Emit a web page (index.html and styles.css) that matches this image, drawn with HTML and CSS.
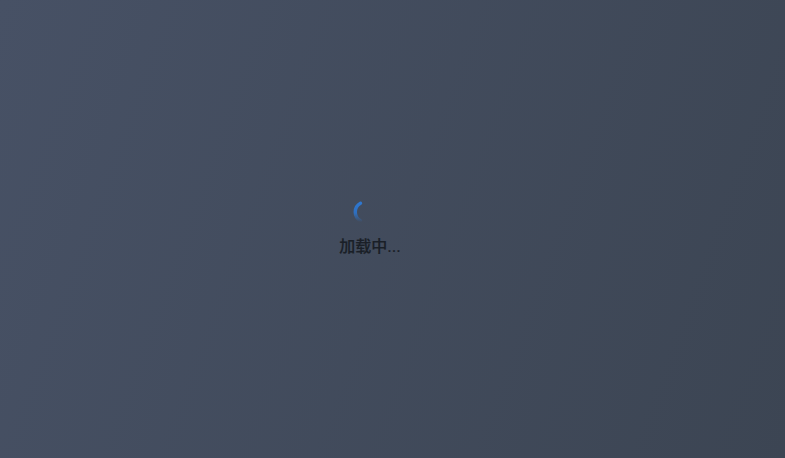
FILE: index.html
```html
<!DOCTYPE html>
<html lang="zh-CN">
<head>
    <meta charset="UTF-8">
    <title>加载中</title>
    <link rel="stylesheet" href="styles.css">
</head>
<body>
    <div class="loading">
        <svg class="spinner" width="20" height="24" viewBox="0 0 20 24">
            <defs>
                <linearGradient id="arc-fade" gradientUnits="userSpaceOnUse" x1="0" y1="2" x2="0" y2="22">
                    <stop offset="0" stop-color="#2e78d2"/>
                    <stop offset="0.55" stop-color="#2e6fc0"/>
                    <stop offset="1" stop-color="#2e6fc0" stop-opacity="0"/>
                </linearGradient>
            </defs>
            <path d="M7.5 3.2 A10 10 0 0 0 7.5 20.8" fill="none" stroke="url(#arc-fade)" stroke-width="3.4" stroke-linecap="round"/>
        </svg>
        <div class="loading-text">加载中...</div>
    </div>
</body>
</html>
```

FILE: styles.css
```css
html, body {
    height: 100%;
    margin: 0;
}
body {
    background: linear-gradient(110deg, #475165 0%, #3c4553 100%);
    font-family: "Liberation Sans", "Noto Sans CJK SC", sans-serif;
    overflow: hidden;
}
.loading {
    height: 100%;
    display: flex;
    flex-direction: column;
    align-items: center;
    justify-content: center;
    width: 740px;
}
.spinner {
    display: block;
    margin: 0 14px 12px 0;
}
.loading-text {
    font-size: 16px;
    font-weight: 500;
    line-height: 22px;
    color: #1a1f27;
    -webkit-text-stroke: 0.2px #1a1f27;
}
```
